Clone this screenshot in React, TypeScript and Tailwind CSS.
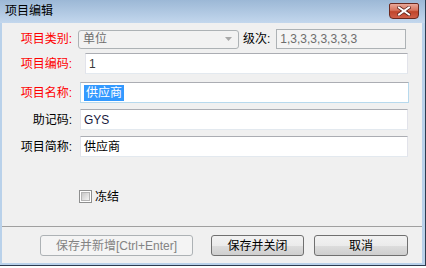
import type { ReactNode } from 'react'

const FONT = { fontFamily: '"Liberation Sans", "Noto Sans CJK SC", sans-serif' }

function Label({ children, red }: { children: ReactNode; red?: boolean }) {
  return (
    <div
      className={`w-[70px] shrink-0 text-right text-[12px] leading-none ${
        red ? 'text-[#ff0000]' : 'text-black'
      }`}
    >
      {children}
    </div>
  )
}

function TextBox({
  children,
  focused,
  className = ''
}: {
  children?: ReactNode
  focused?: boolean
  className?: string
}) {
  return (
    <div
      className={`flex items-center bg-white px-[3px] text-[12px] leading-none border border-t-[#abadb3] ${
        focused
          ? 'border-[#b7d9ed] border-t-[#3d7bad]'
          : 'border-[#e2e3ea] border-b-[#e3e9ef]'
      } ${className}`}
    >
      {children}
    </div>
  )
}

function WinButton({ children, disabled, className = '' }: { children: ReactNode; disabled?: boolean; className?: string }) {
  return (
    <button
      type="button"
      disabled={disabled}
      className={`h-[21px] rounded-[3px] border text-[12px] leading-none ${
        disabled
          ? 'border-[#adb2b5] bg-[#f4f4f4] text-[#838383]'
          : 'border-[#707070] bg-[linear-gradient(#f2f2f2_0%,#ebebeb_50%,#dddddd_50%,#cfcfcf_100%)] text-black'
      } ${className}`}
    >
      {children}
    </button>
  )
}

export default function App() {
  return (
    <div className="w-[426px] h-[268px] bg-white select-none" style={FONT}>
      <div className="w-[426px] h-[266px] flex flex-col bg-[#b9d1ea] border-r border-b border-[#2c3b4f]">
        {/* title bar */}
        <div className="h-[23px] shrink-0 flex items-start justify-between pl-[5px] pr-[6px] bg-[linear-gradient(#9cb8d6,#c3d7ed)]">
          <span className="mt-[5px] text-[12px] leading-none text-black">项目编辑</span>
          <div className="mt-[3px] w-[30px] h-[16px] rounded-b-[4px] rounded-t-[2px] border border-[#6b2a20] bg-[linear-gradient(#e9a899_0%,#d7735c_45%,#c0452b_55%,#d0604a_100%)] flex items-center justify-center">
            <svg width="14" height="10" viewBox="0 0 14 10">
              <path d="M2 1.5 L12 8.5 M12 1.5 L2 8.5" stroke="#5a1e16" strokeWidth="3.4" strokeLinecap="square" />
              <path d="M2 1.5 L12 8.5 M12 1.5 L2 8.5" stroke="#ffffff" strokeWidth="2" strokeLinecap="square" />
            </svg>
          </div>
        </div>

        {/* client area */}
        <div className="flex-1 ml-[2px] mr-[3px] mb-[2px] bg-[#f0f0f0] flex flex-col pt-[6px]">
          <div className="h-[20px] flex items-center">
            <Label red>项目类别:</Label>
            <div className="ml-[6px] w-[161px] h-[19px] rounded-[3px] border border-[#adb2b5] bg-[#f2f2f2] flex items-center justify-between pl-[4px] pr-[6px] text-[12px] leading-none text-[#6d6d6d]">
              <span>单位</span>
              <svg width="7" height="4" viewBox="0 0 7 4">
                <path d="M0 0 H7 L3.5 4 Z" fill="#a8a8a8" />
              </svg>
            </div>
            <span className="ml-[4px] text-[12px] leading-none text-black">级次:</span>
            <div className="ml-[6px] w-[130px] h-[20px] border border-[#adb2b5] bg-[#f4f4f4] flex items-center px-[3px] text-[12px] leading-none text-[#6d6d6d]">
              1,3,3,3,3,3,3,3
            </div>
          </div>

          <div className="mt-[4px] h-[21px] flex items-center">
            <Label red>项目编码:</Label>
            <TextBox className="ml-[13px] mr-[14px] flex-1 h-[21px] text-[#3a3a3a]">1</TextBox>
          </div>

          <div className="mt-[8px] h-[21px] flex items-center">
            <Label red>项目名称:</Label>
            <TextBox focused className="ml-[8px] mr-[13px] flex-1 h-[21px] px-[1px]">
              <span className="bg-[#3399ff] text-white px-[2px] py-[2px]">供应商</span>
            </TextBox>
          </div>

          <div className="mt-[6px] h-[21px] flex items-center">
            <Label>助记码:</Label>
            <TextBox className="ml-[8px] mr-[14px] flex-1 h-[21px] text-[#1a1a40]">GYS</TextBox>
          </div>

          <div className="mt-[6px] h-[21px] flex items-center">
            <Label>项目简称:</Label>
            <TextBox className="ml-[8px] mr-[14px] flex-1 h-[21px] text-black">供应商</TextBox>
          </div>

          <div className="mt-[33px] h-[13px] flex items-center pl-[77px]">
            <div className="w-[13px] h-[13px] border border-[#8e8f8f] bg-white p-px">
              <div className="w-full h-full border border-[#b4b4b4] bg-[linear-gradient(135deg,#c8c8c8,#f4f4f4)]" />
            </div>
            <span className="ml-[3px] text-[12px] leading-none text-black">冻结</span>
          </div>

          <div className="mt-[23px] h-px bg-[#a0a0a0]" />

          <div className="mt-[8px] flex items-center justify-end pr-[14px]">
            <WinButton disabled className="w-[153px]">保存并新增[Ctrl+Enter]</WinButton>
            <WinButton className="ml-[18px] w-[93px]">保存并关闭</WinButton>
            <WinButton className="ml-[10px] w-[94px]">取消</WinButton>
          </div>
        </div>
      </div>
    </div>
  )
}
